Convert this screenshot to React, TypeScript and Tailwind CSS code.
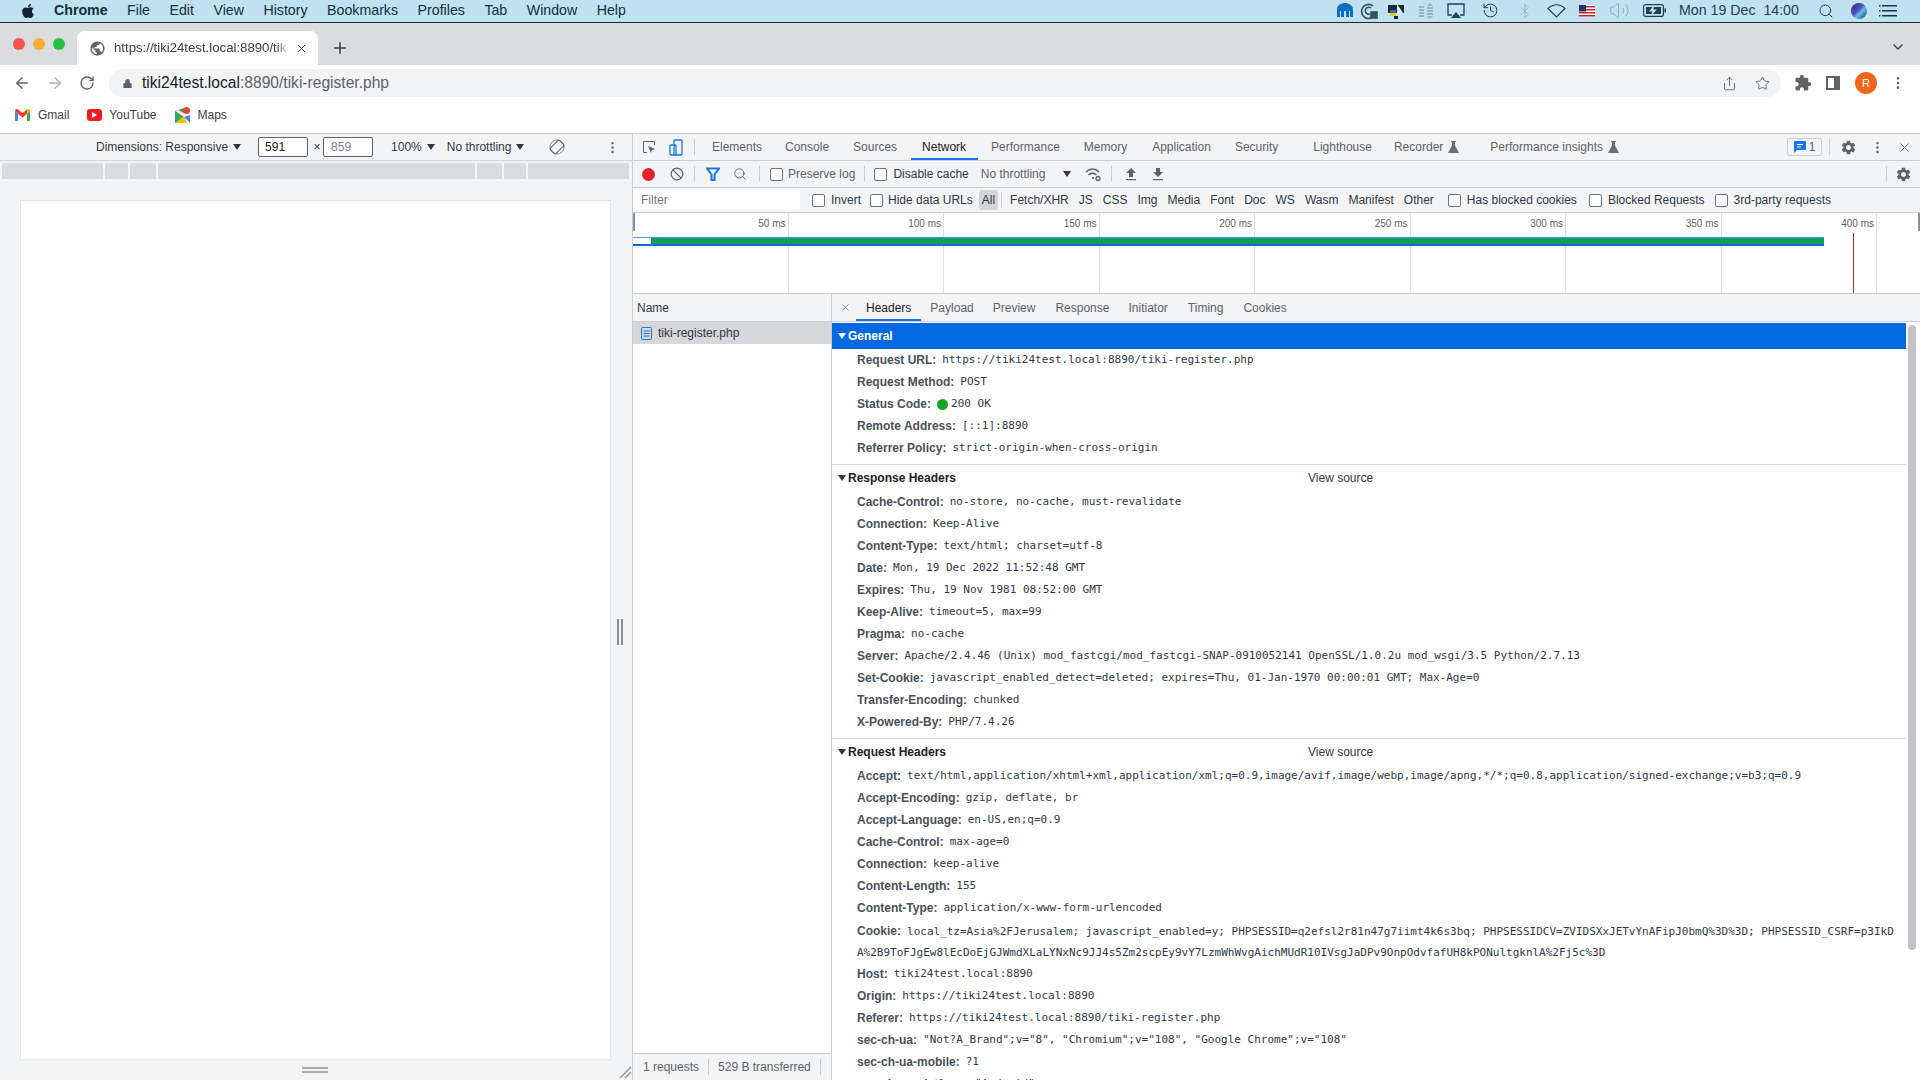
import React from 'react';
import { Star, Share, Search, History, Bluetooth, Volume2, Ban, RotateCw, ArrowLeft, ArrowRight, ChevronDown, X, Plus, Lock, EllipsisVertical } from 'lucide-react';
import { FaApple } from 'react-icons/fa';
import { MdSettings, MdExtension, MdPublic } from 'react-icons/md';

const MENUS = ['File', 'Edit', 'View', 'History', 'Bookmarks', 'Profiles', 'Tab', 'Window', 'Help'];

const FILTERS = [
  { label: 'Fetch/XHR', cls: 'ml-[8px]' },
  { label: 'JS', cls: 'ml-[10px]' },
  { label: 'CSS', cls: 'ml-[10px]' },
  { label: 'Img', cls: 'ml-[10px]' },
  { label: 'Media', cls: 'ml-[10px]' },
  { label: 'Font', cls: 'ml-[10px]' },
  { label: 'Doc', cls: 'ml-[10px]' },
  { label: 'WS', cls: 'ml-[10px]' },
  { label: 'Wasm', cls: 'ml-[10px]' },
  { label: 'Manifest', cls: 'ml-[10px]' },
  { label: 'Other', cls: 'ml-[10px]' },
];

const GENERAL = [
  ['Request URL', 'https://tiki24test.local:8890/tiki-register.php'],
  ['Request Method', 'POST'],
  ['Status Code', '200 OK'],
  ['Remote Address', '[::1]:8890'],
  ['Referrer Policy', 'strict-origin-when-cross-origin'],
];

const RESPONSE = [
  ['Cache-Control', 'no-store, no-cache, must-revalidate'],
  ['Connection', 'Keep-Alive'],
  ['Content-Type', 'text/html; charset=utf-8'],
  ['Date', 'Mon, 19 Dec 2022 11:52:48 GMT'],
  ['Expires', 'Thu, 19 Nov 1981 08:52:00 GMT'],
  ['Keep-Alive', 'timeout=5, max=99'],
  ['Pragma', 'no-cache'],
  ['Server', 'Apache/2.4.46 (Unix) mod_fastcgi/mod_fastcgi-SNAP-0910052141 OpenSSL/1.0.2u mod_wsgi/3.5 Python/2.7.13'],
  ['Set-Cookie', 'javascript_enabled_detect=deleted; expires=Thu, 01-Jan-1970 00:00:01 GMT; Max-Age=0'],
  ['Transfer-Encoding', 'chunked'],
  ['X-Powered-By', 'PHP/7.4.26'],
];

const REQUEST_TOP = [
  ['Accept', 'text/html,application/xhtml+xml,application/xml;q=0.9,image/avif,image/webp,image/apng,*/*;q=0.8,application/signed-exchange;v=b3;q=0.9'],
  ['Accept-Encoding', 'gzip, deflate, br'],
  ['Accept-Language', 'en-US,en;q=0.9'],
  ['Cache-Control', 'max-age=0'],
  ['Connection', 'keep-alive'],
  ['Content-Length', '155'],
  ['Content-Type', 'application/x-www-form-urlencoded'],
];

const REQUEST_BOTTOM = [
  ['Host', 'tiki24test.local:8890'],
  ['Origin', 'https://tiki24test.local:8890'],
  ['Referer', 'https://tiki24test.local:8890/tiki-register.php'],
  ['sec-ch-ua', '"Not?A_Brand";v="8", "Chromium";v="108", "Google Chrome";v="108"'],
  ['sec-ch-ua-mobile', '?1'],
  ['sec-ch-ua-platform', '"Android"'],
];

const TICKS = ['50 ms', '100 ms', '150 ms', '200 ms', '250 ms', '300 ms', '350 ms', '400 ms'];

const Arrow = ({ className = '' }: { className?: string }) => (
  <svg width="8" height="6" viewBox="0 0 8 6" className={className}><path d="M0 0h8L4 6z" fill="#303942" /></svg>
);

const Check = ({ className = '' }: { className?: string }) => (
  <span className={`block w-[13px] h-[13px] rounded-[2px] border border-[#6f7377] bg-white shrink-0 ${className}`} />
);

const Sep = ({ className = '' }: { className?: string }) => (
  <span className={`block w-px h-[16px] bg-[#ccced2] shrink-0 ${className}`} />
);

const Flask = ({ className = '' }: { className?: string }) => (
  <svg width="11" height="12" viewBox="0 0 11 12" className={className}><path d="M3 0h5v1H7v3.5l4 7.5H0l4-7.5V1H3z" fill="#6b6f74" /></svg>
);

const Row = ({ name, value }: { name: string; value: string }) => (
  <div className="h-[18px] mb-[4px] flex items-center pl-[25px] whitespace-nowrap">
    <span className="font-bold text-[#4b5158]">{name}:</span>
    {name === 'Status Code' && <span className="block w-[11px] h-[11px] rounded-full bg-[#16a32a] ml-[6px] -mr-[3px]" />}
    <span className="ml-[6px] text-[11px] font-['DejaVu_Sans_Mono',monospace] text-[#303942]">{value}</span>
  </div>
);

const MenuBar = () => (
  <div className="h-[22px] bg-[#c0e1ef] flex items-center text-[14.2px] text-[#12303e] shrink-0">
    <FaApple className="ml-[20px] text-[16px] text-[#10242e]" />
    <span className="ml-[18px] font-bold">Chrome</span>
    {MENUS.map((m) => <span key={m} className="ml-[19.5px]">{m}</span>)}
    <div className="ml-auto flex items-center text-[#23404e]">
      <svg width="16" height="15" viewBox="0 0 16 15"><path d="M8 0c4 0 8 2 8 7v7h-3V8h-1v6H9V8H7v6H4V8H3v6H0V7c0-5 4-7 8-7z" fill="#0d6fc4" /></svg>
      <svg width="18" height="18" viewBox="0 0 18 18" className="ml-[7px]" fill="none" stroke="#33525f" strokeWidth="1.6"><path d="M13 4a7 7 0 1 0-2 12" /><path d="M11 6a3.5 3.5 0 1 0-1 6" /><rect x="11" y="10" width="6" height="6" fill="#33525f" /></svg>
      <svg width="18" height="18" viewBox="0 0 18 18" className="ml-[9px]"><path d="M1 3h16v8H1z" fill="#1a2b36" /><path d="M3 11h6v3H3z" fill="#f2c40f" /><path d="M3 8h6v3H3z" fill="#2c6fc0" /><path d="M10 2l6 9-6 1z" fill="#e9eef0" /><path d="M7 14h4v3H7z" fill="#1a2b36" /></svg>
      <svg width="14" height="18" viewBox="0 0 14 18" className="ml-[14px]" fill="#9db3bd"><path d="M0 4h5v2H0zM0 7h5v2H0zM0 10h5v2H0zM0 13h5v2H0zM8 4l3-3 3 3zM8 5h6v2H8zM8 8h6v2H8zM8 11h6v2H8zM8 14h6l-3 3z" /></svg>
      <svg width="18" height="16" viewBox="0 0 18 16" className="ml-[14px]" fill="none" stroke="#23404e" strokeWidth="1.3"><path d="M5 12H1V1h16v11h-4" /><path d="M4 15l5-6 5 6z" fill="#23404e" stroke="none" /></svg>
      <History size={17} strokeWidth={1.4} className="ml-[17px]" />
      <Bluetooth size={16} strokeWidth={1.3} className="ml-[18px] text-[#9db3bd]" />
      <svg width="19" height="14" viewBox="0 0 19 14" className="ml-[14.5px]" fill="none" stroke="#23404e" strokeWidth="1.2"><path d="M1 4.5C6-.5 13-.5 18 4.5L9.500 13z" /></svg>
      <svg width="16" height="12" viewBox="0 0 16 12" className="ml-[13px]"><rect width="16" height="12" fill="#fff" /><path d="M0 1h16v1.500H0zM0 4h16v1.500H0zM0 7h16v1.500H0zM0 10h16v1.500H0z" fill="#c8202f" /><rect width="7" height="6.500" fill="#25336f" /></svg>
      <Volume2 size={21} strokeWidth={1.1} className="ml-[14px] text-[#93aab5]" />
      <svg width="23" height="13" viewBox="0 0 23 13" className="ml-[13px]"><rect x=".6" y=".6" width="19.800" height="11.800" rx="2" fill="none" stroke="#23404e" strokeWidth="1.200" /><path d="M3 3h15v7H3z" fill="#23404e" /><path d="M11 1l-5 6.500h3.500L8 12l6-6.500h-3.500z" fill="#c0e1ef" /><rect x="21.500" y="4.500" width="1.500" height="4" fill="#23404e" /></svg>
      <span className="ml-[13px] w-[120px] whitespace-nowrap">Mon 19 Dec&nbsp; 14:00</span>
      <Search size={16} strokeWidth={1.5} className="ml-[19px]" />
      <span className="ml-[17px] block w-[16px] h-[16px] rounded-full bg-[linear-gradient(135deg,#1d2a70,#5a4fc4_45%,#56c3e8_60%,#20254f)]" />
      <svg width="18" height="12" viewBox="0 0 18 12" className="ml-[12px] mr-[23px]" fill="#1a3341"><path d="M3 0h15v1.400H3zM3 5h15v1.400H3zM3 10h15v1.400H3zM0 0h1.500v1.400H0zM0 5h1.500v1.400H0zM0 10h1.500v1.400H0z" /></svg>
    </div>
  </div>
);

const ChromeBar = () => (
  <div className="shrink-0 bg-white">
    <div className="h-[42px] bg-[#dadce0] flex items-end relative">
      <span className="absolute left-[13px] top-[15px] w-[12px] h-[12px] rounded-full bg-[#f1544d]" />
      <span className="absolute left-[33px] top-[15px] w-[12px] h-[12px] rounded-full bg-[#f5b031]" />
      <span className="absolute left-[53px] top-[15px] w-[12px] h-[12px] rounded-full bg-[#27c23f]" />
      <div className="ml-[77px] w-[241px] h-[34px] bg-white rounded-t-[8px] flex items-center">
        <MdPublic size={17} className="ml-[12px] text-[#5f6368]" />
        <span className="ml-[8px] w-[176px] overflow-hidden whitespace-nowrap text-[13.2px] text-[#3c4043] [mask-image:linear-gradient(90deg,#000_92%,transparent)]">https://tiki24test.local:8890/tik</span>
        <X size={13} strokeWidth={1.8} className="ml-[5px] text-[#3c4043]" />
      </div>
      <Plus size={18} strokeWidth={2} className="ml-[13px] mb-[8px] text-[#3c4043]" />
      <ChevronDown size={16} strokeWidth={2} className="ml-auto mr-[14px] mb-[10px] text-[#3c4043]" />
    </div>
    <div className="h-[36px] flex items-center">
      <ArrowLeft size={18} strokeWidth={1.800} className="ml-[13px] text-[#5f6368]" />
      <ArrowRight size={18} strokeWidth={1.800} className="ml-[15px] text-[#b0b3b7]" />
      <RotateCw size={16} strokeWidth={2} className="ml-[15px] text-[#5f6368]" />
      <div className="ml-[14px] w-[1672px] h-[28px] rounded-full bg-[#f1f3f4] flex items-center">
        <Lock size={11} strokeWidth={0} fill="#5f6368" className="ml-[13px]" />
        <span className="ml-[9px] text-[15.6px] text-[#202124]">tiki24test.local<span className="text-[#5f6368]">:8890/tiki-register.php</span></span>
        <Share size={15} strokeWidth={1.5} className="ml-auto text-[#5f6368]" />
        <Star size={15} strokeWidth={1.5} className="ml-[18px] mr-[11px] text-[#5f6368]" />
      </div>
      <MdExtension size={18} className="ml-[13px] text-[#5f6368]" />
      <span className="ml-[14px] block w-[14px] h-[14px] border-2 border-[#5f6368] border-r-[6px]" />
      <span className="ml-[15px] w-[22px] h-[22px] rounded-full bg-[#f4651c] text-white text-[11px] flex items-center justify-center">R</span>
      <EllipsisVertical size={16} className="ml-[13px] text-[#5f6368]" />
    </div>
    <div className="h-[33px] pb-[4px] flex items-center text-[12px] text-[#3c4043] border-b border-[#cbcdd1]">
      <svg width="15" height="12" viewBox="0 0 15 12" className="ml-[15px]"><path d="M0 2v9a1 1 0 0 0 1 1h2V5z" fill="#4285f4" /><path d="M15 2v9a1 1 0 0 1-1 1h-2V5z" fill="#34a853" /><path d="M0 2l3 3 4.500 3.400L12 5l3-3c0-2-2-2.500-3-1.500L7.500 4 3 .5C2-.500 0 0 0 2z" fill="#ea4335" /><path d="M12 5l3-3c0-1.500-1.500-2.500-3-1.500z" fill="#fbbc04" /></svg>
      <span className="ml-[8px]">Gmail</span>
      <span className="ml-[18px] w-[15px] h-[12px] rounded-[3px] bg-[#ee1c1c] flex items-center justify-center">
        <svg width="5" height="6" viewBox="0 0 5 6"><path d="M0 0l5 3-5 3z" fill="#fff" /></svg>
      </span>
      <span className="ml-[7px]">YouTube</span>
      <svg width="15" height="16" viewBox="0 0 15 16" className="ml-[18px]"><path d="M0 4l9-3v12l-9 3z" fill="#34a853" /><path d="M0 16l9-7 3 7z" fill="#fbbc04" /><path d="M0 4l9 6V6L3 3z" fill="#e8eaed" /><path d="M9 10l6 6V8z" fill="#4285f4" /><circle cx="11.500" cy="3.500" r="3.500" fill="#ea4335" /></svg>
      <span className="ml-[8px]">Maps</span>
    </div>
  </div>
);

const DeviceArea = () => (
  <div className="w-[632px] shrink-0 flex flex-col bg-[#f3f4f5] text-[12px] text-[#303942] relative">
    <div className="h-[27px] flex items-center border-b border-[#d3d5d9] shrink-0 whitespace-nowrap">
      <span className="ml-[96px]">Dimensions: Responsive</span>
      <Arrow className="ml-[5px]" />
      <span className="ml-[17px] w-[50px] h-[20px] border border-[#5f6368] rounded-[2px] bg-white flex items-center pl-[6px] text-[#202124]">591</span>
      <span className="ml-[3px] w-[12px] text-center">×</span>
      <span className="w-[50px] h-[20px] border border-[#5f6368] rounded-[2px] bg-white flex items-center pl-[7px] text-[#80868b]">859</span>
      <span className="ml-[18px]">100%</span>
      <Arrow className="ml-[5px]" />
      <span className="ml-[12px]">No throttling</span>
      <Arrow className="ml-[5px]" />
      <svg width="16" height="16" viewBox="0 0 16 16" className="ml-[25px]" fill="none" stroke="#5f6368"><rect x="4" y="1.500" width="8" height="13" rx="1" transform="rotate(45 8 8)" /><circle cx="8" cy="8" r="7" strokeWidth=".7" /></svg>
      <EllipsisVertical size={15} className="ml-[40px] text-[#5f6368]" />
    </div>
    <div className="mt-[2px] h-[16px] flex gap-[2px] pl-[2px] pr-[3px] shrink-0">
      <div className="w-[101px] bg-[#d9dbdf]" />
      <div className="w-[23px] bg-[#d9dbdf]" />
      <div className="w-[26px] bg-[#d9dbdf]" />
      <div className="w-[317px] bg-[#d9dbdf]" />
      <div className="w-[25px] bg-[#d9dbdf]" />
      <div className="w-[22px] bg-[#d9dbdf]" />
      <div className="w-[101px] bg-[#d9dbdf]" />
    </div>
    <div className="mt-[21px] ml-[20px] w-[591px] h-[860px] bg-white border border-[#e6e7e9] shrink-0" />
    <div className="h-[20px] flex flex-col items-center justify-center gap-[2px] pr-[1px] w-[631px] shrink-0">
      <span className="block w-[26px] h-[2px] bg-[#a8abaf]" />
      <span className="block w-[26px] h-[2px] bg-[#a8abaf]" />
    </div>
    <div className="absolute right-[9px] top-[485px] w-[6px] h-[26px] border-x-2 border-[#8b8e92]" />
    <svg width="14" height="14" viewBox="0 0 14 14" className="absolute right-[0px] bottom-[1px]" stroke="#8b8e92" strokeWidth="1.200"><path d="M2 13L13 2M7 13l6-6" /></svg>
  </div>
);

const DevToolsTop = () => (
  <>
    <div className="h-[27px] flex items-center border-b border-[#cbcdd1] bg-[#f3f4f5] text-[12px] text-[#5f6368] shrink-0 whitespace-nowrap">
      <svg width="14" height="14" viewBox="0 0 14 14" className="ml-[9px]" fill="none" stroke="#5f6368"><path d="M5 12.500H1.500v-11h11V5" /><path d="M6 6l7 3-3 1-1 3z" fill="#5f6368" stroke="none" /></svg>
      <svg width="14" height="17" viewBox="0 0 14 17" className="ml-[13px]" fill="none" stroke="#1a73e8" strokeWidth="1.300"><rect x="5" y="1" width="8" height="15" rx="1" /><rect x="1" y="6" width="6" height="10" rx="1" /></svg>
      <Sep className="ml-[11px]" />
      <span className="ml-[17px]">Elements</span>
      <span className="ml-[23px]">Console</span>
      <span className="ml-[24px]">Sources</span>
      <span className="ml-[25px] h-full flex items-center text-[#202124] relative">
        Network
        <span className="absolute -left-[11px] -right-[12px] bottom-0 h-[2px] bg-[#1a73e8]" />
      </span>
      <span className="ml-[25px]">Performance</span>
      <span className="ml-[24px]">Memory</span>
      <span className="ml-[25px]">Application</span>
      <span className="ml-[24px]">Security</span>
      <span className="ml-[35px]">Lighthouse</span>
      <span className="ml-[22px]">Recorder</span>
      <Flask className="ml-[5px]" />
      <span className="ml-[31px]">Performance insights</span>
      <Flask className="ml-[5px]" />
      <span className="ml-auto w-[35px] h-[18px] border border-[#cdd0d4] rounded-[2px] flex items-center justify-center gap-[3px]">
        <svg width="12" height="12" viewBox="0 0 12 12"><path d="M1 0h10a1 1 0 0 1 1 1v7a1 1 0 0 1-1 1H3l-3 3V1a1 1 0 0 1 1-1z" fill="#1a73e8" /><path d="M3 3h6v1H3zM3 5.500h4v1H3z" fill="#fff" /></svg>
        1
      </span>
      <Sep className="ml-[7px]" />
      <MdSettings size={17} className="ml-[10px]" />
      <EllipsisVertical size={15} className="ml-[13px]" />
      <X size={15} strokeWidth={1.500} className="ml-[12px] mr-[8px]" />
    </div>
    <div className="h-[27px] flex items-center border-b border-[#cbcdd1] bg-[#f3f4f5] text-[12px] text-[#5f6368] shrink-0 whitespace-nowrap">
      <span className="ml-[9px] block w-[13px] h-[13px] rounded-full bg-[#e3222c]" />
      <Ban size={14} strokeWidth={2} className="ml-[15px]" />
      <Sep className="ml-[10px]" />
      <svg width="14" height="15" viewBox="0 0 14 15" className="ml-[11px]" fill="none" stroke="#1a73e8" strokeWidth="2"><path d="M1 1.500h12L8.500 7.500V13h-3V7.500z" /></svg>
      <Search size={14} strokeWidth={1.600} className="ml-[13px]" />
      <Sep className="ml-[12px]" />
      <Check className="ml-[10px]" />
      <span className="ml-[5px]">Preserve log</span>
      <Sep className="ml-[9px]" />
      <Check className="ml-[9px]" />
      <span className="ml-[6px] text-[#303942]">Disable cache</span>
      <span className="ml-[12px]">No throttling</span>
      <Arrow className="ml-[18px]" />
      <svg width="17" height="15" viewBox="0 0 17 15" className="ml-[14px]" fill="none" stroke="#5f6368" strokeWidth="1.500"><path d="M1 5c4-4 9-4 13 0M3.500 8c2.500-2.500 5.500-2.500 8 0" /><circle cx="8" cy="11" r="1" fill="#5f6368" stroke="none" /><circle cx="13" cy="11.500" r="2" strokeWidth="1.300" /></svg>
      <Sep className="ml-[9px]" />
      <svg width="12" height="14" viewBox="0 0 12 14" className="ml-[13px]"><path d="M6 1l5 5H8v4H4V6H1zM1 12h10v1.300H1z" fill="#5f6368" /></svg>
      <svg width="12" height="14" viewBox="0 0 12 14" className="ml-[15px]"><path d="M4 1h4v4h3l-5 5-5-5h3zM1 12h10v1.300H1z" fill="#5f6368" /></svg>
      <Sep className="ml-auto" />
      <MdSettings size={17} className="ml-[8px] mr-[8px]" />
    </div>
    <div className="h-[25px] flex items-center border-b border-[#cbcdd1] bg-[#f3f4f5] text-[12px] text-[#303942] shrink-0 whitespace-nowrap">
      <span className="w-[167px] h-[20px] bg-white flex items-center pl-[8px] text-[#70757a]">Filter</span>
      <Check className="ml-[12px]" />
      <span className="ml-[6px]">Invert</span>
      <Check className="ml-[9px]" />
      <span className="ml-[5px]">Hide data URLs</span>
      <span className="ml-[6px] px-[3px] h-[20px] rounded-[3px] bg-[#d3d5d9] flex items-center">All</span>
      <Sep className="ml-[3px]" />
      {FILTERS.map((f) => <span key={f.label} className={f.cls}>{f.label}</span>)}
      <Check className="ml-[14px]" />
      <span className="ml-[6px]">Has blocked cookies</span>
      <Check className="ml-[12px]" />
      <span className="ml-[6px]">Blocked Requests</span>
      <Check className="ml-[10px]" />
      <span className="ml-[6px]">3rd-party requests</span>
    </div>
    <div className="h-[81px] flex relative bg-white border-b border-[#cbcdd1] shrink-0">
      {TICKS.map((t) => (
        <div key={t} className="w-[155.5px] shrink-0 border-r border-[#dfe1e4] text-right pr-[2px] pt-[3px] text-[10px] text-[#5f6368]">{t}</div>
      ))}
      <div className="absolute left-0 top-[24px] w-[1191px] h-[9px] bg-[#0f9d58] border-t border-[#4b96e8] border-b-2 border-b-[#1967c8]">
        <div className="w-[18px] h-full bg-white" />
      </div>
      <div className="absolute left-[1220px] top-[20px] bottom-0 w-px bg-[#b3262f]" />
      <div className="absolute left-0 top-0 h-[18px] w-[2px] bg-[#8b8e92]" />
      <div className="absolute right-0 top-0 h-[18px] w-[2px] bg-[#8b8e92]" />
    </div>
  </>
);

const Details = () => (
  <div className="flex-1 min-w-0 flex flex-col overflow-hidden text-[12px] text-[#303942] relative">
    <div className="h-[28px] flex items-center border-b border-[#cbcdd1] bg-[#f3f4f5] text-[#5f6368] shrink-0 whitespace-nowrap">
      <X size={11} strokeWidth={1.500} className="ml-[8px]" />
      <span className="ml-[15px] h-full flex items-center text-[#202124] relative">
        Headers
        <span className="absolute -left-[10px] -right-[10px] bottom-0 h-[2px] bg-[#1a73e8]" />
      </span>
      <span className="ml-[19px]">Payload</span>
      <span className="ml-[19px]">Preview</span>
      <span className="ml-[20px]">Response</span>
      <span className="ml-[19px]">Initiator</span>
      <span className="ml-[20px]">Timing</span>
      <span className="ml-[20px]">Cookies</span>
    </div>
    <div className="pt-[1px] w-[1074px]">
      <div className="h-[26px] mb-[2px] bg-[#0069e0] flex items-center pl-[6px] font-bold text-white">
        <svg width="8" height="6" viewBox="0 0 8 6"><path d="M0 0h8L4 6z" fill="#fff" /></svg>
        <span className="ml-[2px]">General</span>
      </div>
      {GENERAL.map(([k, v]) => <Row key={k} name={k} value={v} />)}
      <div className="border-t border-[#d9dbde] mt-[7px] h-[29px] pb-[2px] flex items-center pl-[6px] font-bold text-[#202124]">
        <Arrow />
        <span className="ml-[2px] w-[460px]">Response Headers</span>
        <span className="font-normal text-[#303942]">View source</span>
      </div>
      {RESPONSE.map(([k, v]) => <Row key={k} name={k} value={v} />)}
      <div className="border-t border-[#d9dbde] mt-[7px] h-[29px] pb-[2px] flex items-center pl-[6px] font-bold text-[#202124]">
        <Arrow />
        <span className="ml-[2px] w-[460px]">Request Headers</span>
        <span className="font-normal text-[#303942]">View source</span>
      </div>
      {REQUEST_TOP.map(([k, v]) => <Row key={k} name={k} value={v} />)}
      <div className="pl-[25px] leading-[21px] mb-[2px] whitespace-nowrap">
        <span className="font-bold text-[#4b5158]">Cookie:</span>
        <span className="ml-[6px] text-[11px] font-['DejaVu_Sans_Mono',monospace]">local_tz=Asia%2FJerusalem; javascript_enabled=y; PHPSESSID=q2efsl2r81n47g7iimt4k6s3bq; PHPSESSIDCV=ZVIDSXxJETvYnAFipJ0bmQ%3D%3D; PHPSESSID_CSRF=p3IkD</span>
        <br />
        <span className="text-[11px] font-['DejaVu_Sans_Mono',monospace]">A%2B9ToFJgEw8lEcDoEjGJWmdXLaLYNxNc9JJ4s5Zm2scpEy9vY7LzmWhWvgAichMUdR10IVsgJaDPv9OnpOdvfafUH8kPONultgknlA%2Fj5c%3D</span>
      </div>
      {REQUEST_BOTTOM.map(([k, v]) => <Row key={k} name={k} value={v} />)}
    </div>
    <div className="absolute right-[4px] top-[31px] w-[8px] h-[625px] rounded-full bg-[#c1c3c6]" />
  </div>
);

const DevTools = () => (
  <div className="flex-1 min-w-0 flex flex-col border-l border-[#cbcdd1] bg-white overflow-hidden">
    <DevToolsTop />
    <div className="flex-1 min-h-0 flex">
      <div className="w-[199px] shrink-0 flex flex-col border-r border-[#cbcdd1] text-[12px] text-[#303942]">
        <div className="h-[28px] flex items-center bg-[#f3f4f5] border-b border-[#cbcdd1] pl-[4px] shrink-0">Name</div>
        <div className="h-[22px] bg-[#d6d8dc] flex items-center pl-[8px] shrink-0">
          <svg width="11" height="13" viewBox="0 0 11 13" fill="none" stroke="#1a73e8"><rect x=".5" y=".5" width="10" height="12" rx="1" /><path d="M2.500 4h6M2.500 6.500h6M2.500 9h6" /></svg>
          <span className="ml-[6px]">tiki-register.php</span>
        </div>
        <div className="flex-1" />
        <div className="h-[27px] border-t border-[#cbcdd1] bg-[#f3f4f5] flex items-center shrink-0 text-[#5f6368]">
          <span className="ml-[10px]">1 requests</span>
          <Sep className="ml-[9px]" />
          <span className="ml-[9px]">529 B transferred</span>
          <Sep className="ml-[9px]" />
        </div>
      </div>
      <Details />
    </div>
  </div>
);

const App: React.FC = () => {
  return (
    <div className="w-[1920px] h-[1080px] overflow-hidden flex flex-col bg-white font-['Liberation_Sans',Arial,sans-serif]">
      <MenuBar />
      <div className="h-px bg-[#1a2a33] shrink-0" />
      <ChromeBar />
      <div className="flex-1 min-h-0 flex">
        <DeviceArea />
        <DevTools />
      </div>
    </div>
  );
};

export default App;
